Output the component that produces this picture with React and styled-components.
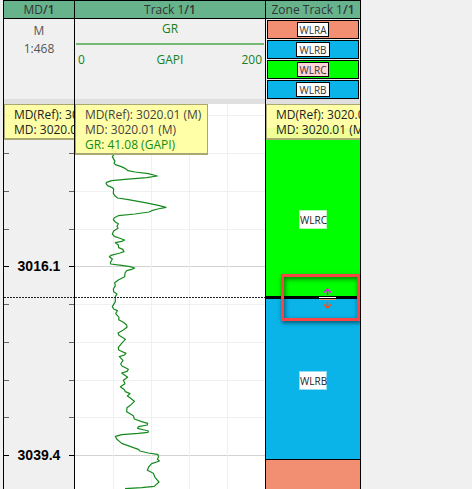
import React from 'react';
import styled, { createGlobalStyle } from 'styled-components';

const Global = createGlobalStyle`
  * { box-sizing: border-box; }
  body { margin: 0; background: #f0f0f0; font-family: "Open Sans", "Noto Sans", sans-serif; overflow: hidden; }
`;

const Board = styled.main`
  display: grid;
  grid-template-columns: 71px minmax(0, 191px) 96px;
  min-height: 100vh;
  padding-left: 3px;
`;

const Track = styled.section`
  display: flex;
  flex-direction: column;
  min-width: 0;
  border-left: 1px solid #000;
  border-right: ${(p) => (p.$last ? '1px solid #000' : '0')};
`;

const Title = styled.h2`
  margin: 0;
  height: 19px;
  border: solid #000;
  border-width: 1px 0;
  background: #67b38c;
  color: #333;
  font-size: 12px;
  font-weight: 400;
  line-height: 17px;
  text-align: center;
  white-space: nowrap;
`;

const Index = styled.span`
  font-weight: 600;
`;

const Head = styled.div`
  height: 85px;
  border-bottom: 5px solid #dfdfdf;
  color: ${(p) => p.$color || '#555'};
  font-size: 12px;
  line-height: 18px;
  text-align: center;
`;

const Unit = styled.div`
  padding-top: 3px;
`;

const CurveName = styled.div`
  height: 26px;
  line-height: 20px;
  margin: 0 1px 0 1px;
  border-bottom: 2px solid #74b974;
`;

const Scale = styled.div`
  display: grid;
  grid-template-columns: 1fr auto 1fr;
  padding: 6px 3px 0;
`;

const ScaleStart = styled.span`
  text-align: left;
`;

const ScaleEnd = styled.span`
  text-align: right;
`;

const Legend = styled.div`
  display: flex;
  flex-direction: column;
  gap: 1px;
  padding: 1px 1px 0;
`;

const LegendRow = styled.div`
  display: flex;
  align-items: center;
  justify-content: center;
  height: 19px;
  border: 1px solid #000;
  background: ${(p) => p.$color};
`;

const LegendTag = styled.span`
  height: 15px;
  padding: 0 2px;
  border: 1px solid #000;
  background: ${(p) => (p.$active ? '#ffd5d5' : '#fff')};
  color: #333;
  font-size: 10px;
  line-height: 14px;
`;

const Body = styled.div`
  position: relative;
  flex: 1;
  min-height: 385px;
  overflow: hidden;
  background: ${(p) => p.$bg || 'transparent'};
`;

const Drawing = styled.svg`
  display: block;
`;

const DepthLabel = styled.text`
  font: bold 14px "Liberation Sans", Arial, sans-serif;
`;

const Tip = styled.div`
  position: absolute;
  top: 0;
  left: 0;
  width: ${(p) => p.$width || '100%'};
  padding: 2px 0 1px 9px;
  border: 1px solid #aaa872;
  border-width: 1px ${(p) => (p.$width ? '1px' : '0')} 2px 1px;
  background: rgba(255, 255, 160, 0.93);
  color: ${(p) => (p.$soft ? '#444' : '#222')};
  font-size: 12px;
  line-height: 15px;
  white-space: nowrap;
  overflow: hidden;
`;

const TipCurve = styled.div`
  color: #148c14;
`;

const Cursor = styled.div`
  position: absolute;
  top: 193px;
  left: 0;
  right: 0;
  height: 1px;
  background: repeating-linear-gradient(to right, #222 0 2px, transparent 2px 3px);
`;

const Zones = styled.div`
  display: flex;
  flex-direction: column;
  height: 100%;
`;

const Zone = styled.div`
  display: flex;
  justify-content: center;
  height: ${(p) => p.$height};
  flex: ${(p) => (p.$fill ? '1' : 'none')};
  padding-top: ${(p) => p.$pad || '0'};
  border-bottom: ${(p) => p.$line || '0'} solid #000;
  background: ${(p) => p.$color};
`;

const ZoneTag = styled.span`
  width: 28px;
  height: 19px;
  border: 1px solid ${(p) => p.$edge};
  background: #fff;
  color: #222;
  font-size: 10px;
  line-height: 18px;
  text-align: center;
`;

const Callout = styled.div`
  position: absolute;
  top: 170px;
  right: 0;
  width: 79px;
  height: 47px;
  border: 3px solid #f84545;
  box-shadow: 1px 2px 4px rgba(0, 0, 0, 0.5), inset 1px 2px 5px rgba(0, 0, 0, 0.5);
`;

const Handle = styled.svg`
  position: absolute;
  top: 11px;
  left: 34px;
`;

const rows = [11, 49, 87, 125, 162, 200, 238, 276, 313, 351];
const major = [162, 351];

const curve = [
  [108, 140], [125, 142], [112, 158], [120, 172],
  [117, 177], [121, 182], [137, 187], [150, 193], [159, 200], [180, 204], [220, 209],
  [247, 216], [215, 221], [150, 226], [110, 230], [95, 235], [93, 239], [98, 245], [110, 250], [116, 255], [115, 268], [121, 277],
  [128, 282], [160, 287], [210, 296], [250, 304], [273, 310], [248, 315], [230, 320], [222, 324], [180, 330], [130, 335],
  [118, 341], [115, 347], [121, 354], [130, 359], [126, 367], [129, 373], [116, 381], [112, 390], [118, 397], [132, 402],
  [149, 408], [140, 412], [121, 416], [130, 423], [131, 431], [143, 436], [147, 443], [135, 447], [108, 454], [103, 458],
  [112, 465], [106, 476], [107, 480], [140, 484], [165, 488], [179, 492], [170, 496], [155, 500], [150, 507], [149, 518],
  [130, 528], [119, 536], [121, 545], [115, 555], [116, 563], [126, 570], [121, 578], [121, 593], [112, 608], [116, 615],
  [127, 620], [122, 629], [132, 640], [131, 647], [145, 655], [155, 663], [156, 670], [145, 678], [129, 687], [132, 694],
  [151, 706], [140, 718], [130, 730], [131, 738], [153, 748], [148, 753], [133, 758], [144, 769], [137, 780], [141, 786],
  [160, 796], [156, 802], [140, 807], [158, 820], [145, 829], [150, 839], [136, 848], [148, 857], [151, 863], [165, 869],
  [157, 876], [166, 882], [178, 892], [166, 904], [156, 911], [155, 923], [175, 935], [178, 945], [200, 953], [218, 958],
  [217, 963], [190, 968], [188, 973], [208, 978], [220, 981], [219, 985], [190, 988], [140, 992], [121, 997],
  [125, 1005], [140, 1018], [165, 1027], [190, 1036], [195, 1041], [220, 1047], [248, 1051], [251, 1059], [247, 1065],
  [253, 1071], [230, 1079], [221, 1089], [217, 1099], [235, 1108], [240, 1120], [252, 1134], [238, 1147], [200, 1151], [150, 1154],
];

const points = curve.map((p) => p.join(',')).join(' ');

const legend = [
  { name: 'WLRA', color: '#f28e72' },
  { name: 'WLRB', color: '#0ab4e8' },
  { name: 'WLRC', color: '#00ff00', active: true },
  { name: 'WLRB', color: '#0ab4e8' },
];

function DepthScale() {
  return (
    <Drawing width="100%" height="385" role="img" aria-label="Depth scale">
      {rows.map((y) => (
        <g key={y} fill={major.includes(y) ? '#000' : '#666'}>
          <rect x="0" y={y} width="5" height="1" />
          <rect x="65" y={y} width="5" height="1" />
        </g>
      ))}
      <DepthLabel x="35" y="167" textAnchor="middle">3016.1</DepthLabel>
      <DepthLabel x="35" y="356" textAnchor="middle">3039.4</DepthLabel>
    </Drawing>
  );
}

function LogCurve() {
  return (
    <Drawing width="190" height="385" viewBox="0 0 570 1155" role="img" aria-label="GR curve">
      {rows.map((y) => (
        <rect key={y} x="0" y={y * 3} width="570" height="3" fill={major.includes(y) ? '#d2d2d2' : '#f0f0f0'} />
      ))}
      {[38, 76, 114, 152].map((x) => (
        <rect key={x} x={x * 3} y="0" width="3" height="1155" fill="#f0f0f0" />
      ))}
      <polyline points={points} fill="none" stroke="#168a1e" strokeWidth="3.6" strokeLinejoin="round" />
    </Drawing>
  );
}

export default function App() {
  return (
    <>
      <Global />
      <Board>
        <Track>
          <Title>MD<Index>/1</Index></Title>
          <Head>
            <Unit>M</Unit>
            <div>1:468</div>
          </Head>
          <Body>
            <DepthScale />
            <Cursor />
            <Tip>
              <div>MD(Ref): 3020.01 (M)</div>
              <div>MD: 3020.01 (M)</div>
            </Tip>
          </Body>
        </Track>
        <Track>
          <Title>Track 1<Index>/1</Index></Title>
          <Head $color="#148024">
            <CurveName>GR</CurveName>
            <Scale>
              <ScaleStart>0</ScaleStart>
              <span>GAPI</span>
              <ScaleEnd>200</ScaleEnd>
            </Scale>
          </Head>
          <Body $bg="#fff">
            <LogCurve />
            <Cursor />
            <Tip $width="133px" $soft>
              <div>MD(Ref): 3020.01 (M)</div>
              <div>MD: 3020.01 (M)</div>
              <TipCurve>GR: 41.08 (GAPI)</TipCurve>
            </Tip>
          </Body>
        </Track>
        <Track $last>
          <Title>Zone Track 1<Index>/1</Index></Title>
          <Head>
            <Legend>
              {legend.map((z, i) => (
                <LegendRow key={i} $color={z.color}>
                  <LegendTag $active={z.active}>{z.name}</LegendTag>
                </LegendRow>
              ))}
            </Legend>
          </Head>
          <Body>
            <Zones>
              <Zone $color="#fff" $height="24px" />
              <Zone $color="#00ff00" $height="171px" $pad="82px" $line="3px">
                <ZoneTag $edge="#b0ffb0">WLRC</ZoneTag>
              </Zone>
              <Zone $color="#0ab4e8" $height="161px" $pad="72px" $line="1px">
                <ZoneTag $edge="#90dcf4">WLRB</ZoneTag>
              </Zone>
              <Zone $color="#f28e72" $fill />
            </Zones>
            <Tip>
              <div>MD(Ref): 3020.01 (M)</div>
              <div>MD: 3020.01 (M)</div>
            </Tip>
            <Callout>
              <Handle width="19" height="22" viewBox="0 0 19 22" fill="none" aria-label="Move zone boundary">
                <path d="M9.5 7V1M6 4.5L9.5 1L13 4.5" stroke="#f010f0" strokeWidth="1.5" />
                <path d="M1 9.5H18" stroke="#fff" />
                <path d="M1 11.5H18" stroke="#f28e72" />
                <path d="M9.5 14V20M6 16.5L9.5 20L13 16.5" stroke="#ff4a10" strokeWidth="1.5" />
              </Handle>
            </Callout>
          </Body>
        </Track>
      </Board>
    </>
  );
}
